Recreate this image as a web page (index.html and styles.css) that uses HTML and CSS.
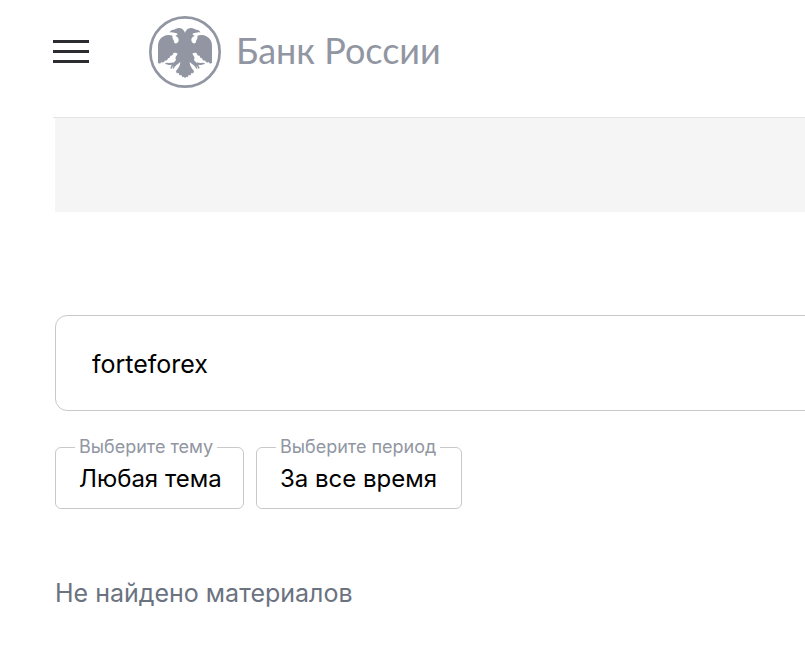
FILE: index.html
```html
<!DOCTYPE html>
<html lang="ru">
<head>
  <meta charset="UTF-8">
  <meta name="viewport" content="width=device-width, initial-scale=1.0">
  <title>Поиск | Банк России</title>
  <link rel="stylesheet" href="styles.css">
</head>
<body>
  <!-- Header -->
  <header class="header">
    <button class="menu-button" type="button" aria-label="Меню">
      <span></span>
      <span></span>
      <span></span>
    </button>
    <a class="logo" href="#">
      <svg class="logo-icon" viewBox="27 24 216 216" aria-hidden="true">
        <defs>
          <path id="half" d="M136 78 C134 69 128 60 117 60 C110 60 106 64 101 65 C95 65 90 68 89 74 C94 71 98 73 103 74 C108 75 112 76 113 79 L106 84 C112 86 116 90 116 96 C116 103 110 107 105 106 C101 104 103 101 101 97 C98 92 96 88 98 83 C82 78 65 84 58 97 C53 106 54 116 54 128 L54 165 C58 168 63 166 65 161 C68 166 73 163 75 157 C79 160 83 156 84 150 C88 152 90 148 91 143 C96 145 99 140 100 136 C104 134 109 134 113 137 L109 144 C106 147 106 151 108 156 L101 164 C96 162 89 167 84 164 L76 165 L76 168 L84 170 C88 173 93 170 96 170 C93 173 91 177 92 182 L95 182 C96 177 98 175 101 174 L97 180 L100 183 C104 177 108 172 113 169 L121 162 C121 172 115 182 108 189 L110 196 L116 195 L118 202 L124 201 L127 208 L132 206 L136 211 Z"/>
        </defs>
        <circle cx="135" cy="132" r="104" fill="none" stroke="#9196a2" stroke-width="8"/>
        <use href="#half" fill="#9196a2"/>
        <use href="#half" fill="#9196a2" transform="translate(270 0) scale(-1 1)"/>
      </svg>
      <span class="logo-text">Банк России</span>
    </a>
  </header>

  <main class="main">
    <div class="banner"></div>

    <!-- Search Form -->
    <form class="search">
      <input class="search-input" type="text" value="forteforex" aria-label="Поиск">
      <div class="filters">
        <fieldset class="filter">
          <legend><label for="theme">Выберите тему</label></legend>
          <select id="theme">
            <option>Любая тема</option>
          </select>
        </fieldset>
        <fieldset class="filter">
          <legend><label for="period">Выберите период</label></legend>
          <select id="period">
            <option>За все время</option>
          </select>
        </fieldset>
      </div>
    </form>

    <p class="result">Не найдено материалов</p>
  </main>
</body>
</html>
```

FILE: styles.css
```css
* {
  box-sizing: border-box;
}
body {
  margin: 0;
  padding-left: 55px;
  background: #fff;
  color: #000;
  font-family: Inter, sans-serif;
  font-size: 25px;
  overflow-x: hidden;
}
.header {
  display: flex;
  align-items: center;
  gap: 60px;
  margin-left: -2px;
  padding: 16px 0 29px;
  border-bottom: 1px solid #e3e4e6;
}
.menu-button {
  display: flex;
  flex-direction: column;
  gap: 7px;
  width: 36px;
  padding: 0 0 2px;
  background: none;
  border: none;
  cursor: pointer;
}
.menu-button span {
  height: 3px;
  background: #2c2d31;
}
.logo {
  display: flex;
  align-items: center;
  gap: 15px;
  color: #9196a2;
  text-decoration: none;
}
.logo-icon {
  width: 72px;
  height: 72px;
}
.logo-text {
  padding-bottom: 4px;
  font-family: Lato, sans-serif;
  font-size: 36px;
  line-height: 40px;
}
.banner {
  height: 94px;
  background: #f5f5f5;
}
.search {
  margin-top: 103px;
}
.search-input {
  display: block;
  width: calc(100% + 24px);
  height: 96px;
  padding: 2px 36px 0;
  border: 1px solid #c8c9cb;
  border-radius: 12px;
  color: #000;
  font: inherit;
}
.filters {
  display: flex;
  gap: 12px;
  margin-top: 24px;
}
.filter {
  min-width: 0;
  height: 74px;
  margin: 0;
  padding: 1px 21px 0 23px;
  border: 1px solid #c8c9cb;
  border-radius: 6px;
}
.filter legend {
  margin-left: -4px;
  padding: 0 4px;
  color: #9196a2;
  font-size: 18px;
  line-height: 24px;
}
.filter select {
  display: block;
  width: 100%;
  height: 36px;
  padding: 0;
  appearance: none;
  background: none;
  border: none;
  color: #000;
  font: inherit;
  font-size: 24px;
  cursor: pointer;
}
.result {
  margin: 66px 0 0;
  color: #6b7280;
  line-height: 36px;
}
```
